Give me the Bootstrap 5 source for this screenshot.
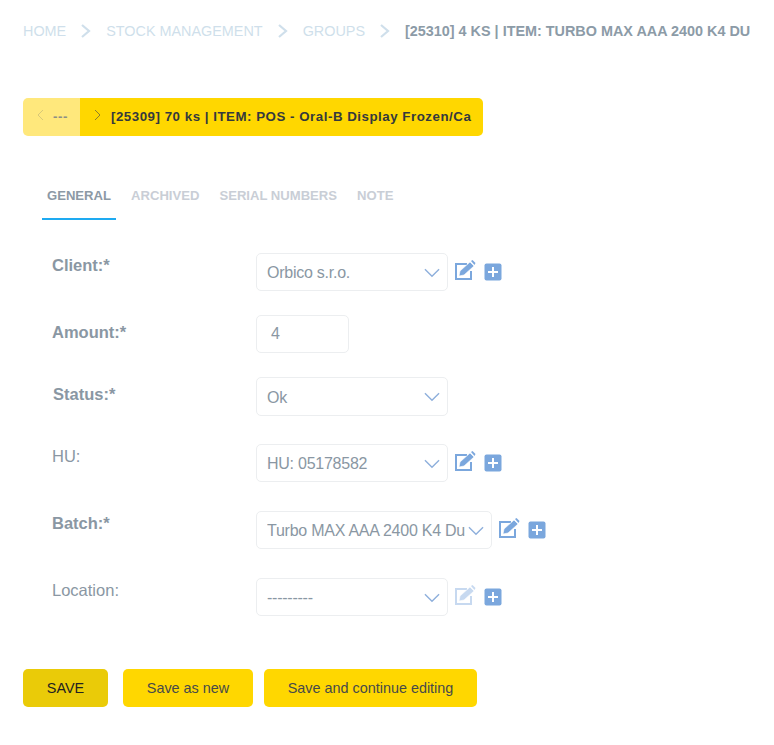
<!DOCTYPE html>
<html lang="en">
<head>
<meta charset="utf-8">
<title>Group</title>
<link href="https://cdn.jsdelivr.net/npm/bootstrap@5.3.0/dist/css/bootstrap.min.css" rel="stylesheet">
<style>
body{font-family:"Liberation Sans",Arial,sans-serif;background:#fff;color:#8a97a3;font-size:16px}
.pg{padding:0 0 0 23px;width:774px}
.crumbs{height:22px;margin-top:20px;font-size:14.4px;line-height:22px;white-space:nowrap}
.crumbs a{color:#cfdfeb;text-decoration:none}
.crumbs svg{margin:0 15px;width:10px;height:14px;vertical-align:-2px}
.crumbs b{color:#8c9ba7}
.pager{margin-top:56px;height:38px;width:460px;border-radius:5px;overflow:hidden;font-weight:700;font-size:13.3px;letter-spacing:.52px}
.pg-prev{background:#ffe87c;width:57px;color:#8d8f85;padding-left:14px}
.pg-next{background:#ffd700;color:#35393d;padding-left:14px;flex:1;white-space:nowrap;overflow:hidden}
.pg-next span{margin-left:1px}
.pager svg{width:7px;height:12px;margin-right:9px;margin-top:-5px;flex:none}
.tabsb{margin-top:41px;margin-left:19px;height:43px;font-weight:700}
.tabsb a{display:block;text-decoration:none;color:#c9ced6;padding:9px 5px 0;height:43px;margin-right:10px;white-space:nowrap;font-size:13.1px}
.tabsb a.on{color:#8c99a5;border-bottom:2px solid #1eaaf1}
.frow{margin-left:29px;height:38px}
.r1{margin-top:33px}.r2{margin-top:24px}.r3{margin-top:24px;height:39px}.r4{margin-top:28px}.r5{margin-top:29px}.r6{margin-top:29px}
.flabel{width:204px;flex:none;margin:0;line-height:20px;padding-top:2px;font-size:16.5px}
.flabel.hi{padding-top:7px}
.flabel.bd{font-weight:700}
.flabel.nudge{padding-left:1px}
.fsel{width:192px;height:100%;border:1px solid #eceef0;border-radius:5px;color:#8a97a3;font-size:16px;letter-spacing:-.25px;padding:0 10px;background:#fff;white-space:nowrap;overflow:hidden;position:relative;line-height:37px;flex:none}
.fsel.wide{width:236px;padding-right:22px}
.fsel.tall{line-height:39px}
.fsel svg{position:absolute;right:7px;top:14px;width:16px;height:10px}
.fsel .clip{display:block;overflow:hidden}
.finput{width:93px;height:100%;border:1px solid #eceef0;border-radius:5px;padding:0 14px;line-height:36px;color:#8a97a3;flex:none}
.ic-e{width:22px;height:22px;margin-left:7px;flex:none;overflow:visible}
.ic-p{width:18px;height:18px;margin-left:7px;flex:none}
.fade-ic{opacity:.42}
.acts{margin-top:53px}
.bt{height:38px;border-radius:5px;background:#ffd700;color:#46494a;font-size:14.4px;line-height:38px;text-align:center;padding:0;border:0}
.b1{width:85px;background:#eacb08;color:#222}
.b2{width:130px;margin-left:15px}
.b3{width:213px;margin-left:11px}
</style>
</head>
<body>
<div class="pg">
  <nav class="crumbs">
    <a href="#">HOME</a><svg viewBox="0 0 10 14"><path d="M1 1l7 6-7 6" fill="none" stroke="#cfdfeb" stroke-width="2.200"/></svg><a href="#">STOCK MANAGEMENT</a><svg viewBox="0 0 10 14"><path d="M1 1l7 6-7 6" fill="none" stroke="#cfdfeb" stroke-width="2.200"/></svg><a href="#">GROUPS</a><svg viewBox="0 0 10 14"><path d="M1 1l7 6-7 6" fill="none" stroke="#cfdfeb" stroke-width="2.200"/></svg><b>[25310] 4 KS | ITEM: TURBO MAX AAA 2400 K4 DU</b>
  </nav>

  <div class="pager d-flex">
    <div class="pg-prev d-flex align-items-center"><svg viewBox="0 0 7 12"><path d="M6 1L1 6l5 5" fill="none" stroke="#d8c878" stroke-width="1"/></svg><span>---</span></div>
    <div class="pg-next d-flex align-items-center"><svg viewBox="0 0 7 12"><path d="M1 1l5 5-5 5" fill="none" stroke="#8d7f2a" stroke-width="1"/></svg><span>[25309] 70 ks | ITEM: POS - Oral-B Display Frozen/Ca</span></div>
  </div>

  <div class="tabsb d-flex">
    <a class="on" href="#">GENERAL</a>
    <a href="#">ARCHIVED</a>
    <a href="#">SERIAL NUMBERS</a>
    <a href="#">NOTE</a>
  </div>

  <form>
    <div class="frow r1 d-flex align-items-stretch">
      <div class="flabel bd">Client:*</div>
      <div class="fsel">Orbico s.r.o.<svg viewBox="0 0 17 10"><path d="M1 1l7.500 7.500L16 1" fill="none" stroke="#8fb0dc" stroke-width="1.500"/></svg></div>
      <svg class="ic-e align-self-center" viewBox="0 0 22 22"><path d="M12 3H1v15h15v-8" fill="none" stroke="#7ba7dd" stroke-width="2"/><path d="M4 15l1-5L15 1l4 4-10 9z" fill="#7ba7dd" stroke="#fff" stroke-width=".6"/><path d="M16 0l1.500-1 3 3-1 2z" fill="#7ba7dd"/></svg>
      <svg class="ic-p align-self-center" viewBox="0 0 18 18"><rect x=".5" y=".5" width="17" height="17" rx="2" fill="#7ba7dd"/><path d="M9 4v10M4 9h10" stroke="#fff" stroke-width="2"/></svg>
    </div>
    <div class="frow r2 d-flex align-items-stretch">
      <div class="flabel bd hi">Amount:*</div>
      <div class="finput">4</div>
    </div>
    <div class="frow r3 d-flex align-items-stretch">
      <div class="flabel bd hi nudge">Status:*</div>
      <div class="fsel tall">Ok<svg viewBox="0 0 17 10"><path d="M1 1l7.500 7.500L16 1" fill="none" stroke="#8fb0dc" stroke-width="1.500"/></svg></div>
    </div>
    <div class="frow r4 d-flex align-items-stretch">
      <div class="flabel">HU:</div>
      <div class="fsel">HU: 05178582<svg viewBox="0 0 17 10"><path d="M1 1l7.500 7.500L16 1" fill="none" stroke="#8fb0dc" stroke-width="1.500"/></svg></div>
      <svg class="ic-e align-self-center" viewBox="0 0 22 22"><path d="M12 3H1v15h15v-8" fill="none" stroke="#7ba7dd" stroke-width="2"/><path d="M4 15l1-5L15 1l4 4-10 9z" fill="#7ba7dd" stroke="#fff" stroke-width=".6"/><path d="M16 0l1.500-1 3 3-1 2z" fill="#7ba7dd"/></svg>
      <svg class="ic-p align-self-center" viewBox="0 0 18 18"><rect x=".5" y=".5" width="17" height="17" rx="2" fill="#7ba7dd"/><path d="M9 4v10M4 9h10" stroke="#fff" stroke-width="2"/></svg>
    </div>
    <div class="frow r5 d-flex align-items-stretch">
      <div class="flabel bd">Batch:*</div>
      <div class="fsel wide"><span class="clip">Turbo MAX AAA 2400 K4 Du</span><svg viewBox="0 0 17 10"><path d="M1 1l7.500 7.500L16 1" fill="none" stroke="#8fb0dc" stroke-width="1.500"/></svg></div>
      <svg class="ic-e align-self-center" viewBox="0 0 22 22"><path d="M12 3H1v15h15v-8" fill="none" stroke="#7ba7dd" stroke-width="2"/><path d="M4 15l1-5L15 1l4 4-10 9z" fill="#7ba7dd" stroke="#fff" stroke-width=".6"/><path d="M16 0l1.500-1 3 3-1 2z" fill="#7ba7dd"/></svg>
      <svg class="ic-p align-self-center" viewBox="0 0 18 18"><rect x=".5" y=".5" width="17" height="17" rx="2" fill="#7ba7dd"/><path d="M9 4v10M4 9h10" stroke="#fff" stroke-width="2"/></svg>
    </div>
    <div class="frow r6 d-flex align-items-stretch">
      <div class="flabel">Location:</div>
      <div class="fsel">---------<svg viewBox="0 0 17 10"><path d="M1 1l7.500 7.500L16 1" fill="none" stroke="#8fb0dc" stroke-width="1.500"/></svg></div>
      <svg class="ic-e fade-ic align-self-center" viewBox="0 0 22 22"><path d="M12 3H1v15h15v-8" fill="none" stroke="#7ba7dd" stroke-width="2"/><path d="M4 15l1-5L15 1l4 4-10 9z" fill="#7ba7dd" stroke="#fff" stroke-width=".6"/><path d="M16 0l1.500-1 3 3-1 2z" fill="#7ba7dd"/></svg>
      <svg class="ic-p align-self-center" viewBox="0 0 18 18"><rect x=".5" y=".5" width="17" height="17" rx="2" fill="#7ba7dd"/><path d="M9 4v10M4 9h10" stroke="#fff" stroke-width="2"/></svg>
    </div>
    <div class="acts d-flex">
      <button type="button" class="btn bt b1">SAVE</button>
      <button type="button" class="btn bt b2">Save as new</button>
      <button type="button" class="btn bt b3">Save and continue editing</button>
    </div>
  </form>
</div>
<script src="https://cdn.jsdelivr.net/npm/bootstrap@5.3.0/dist/js/bootstrap.bundle.min.js"></script>
</body>
</html>
